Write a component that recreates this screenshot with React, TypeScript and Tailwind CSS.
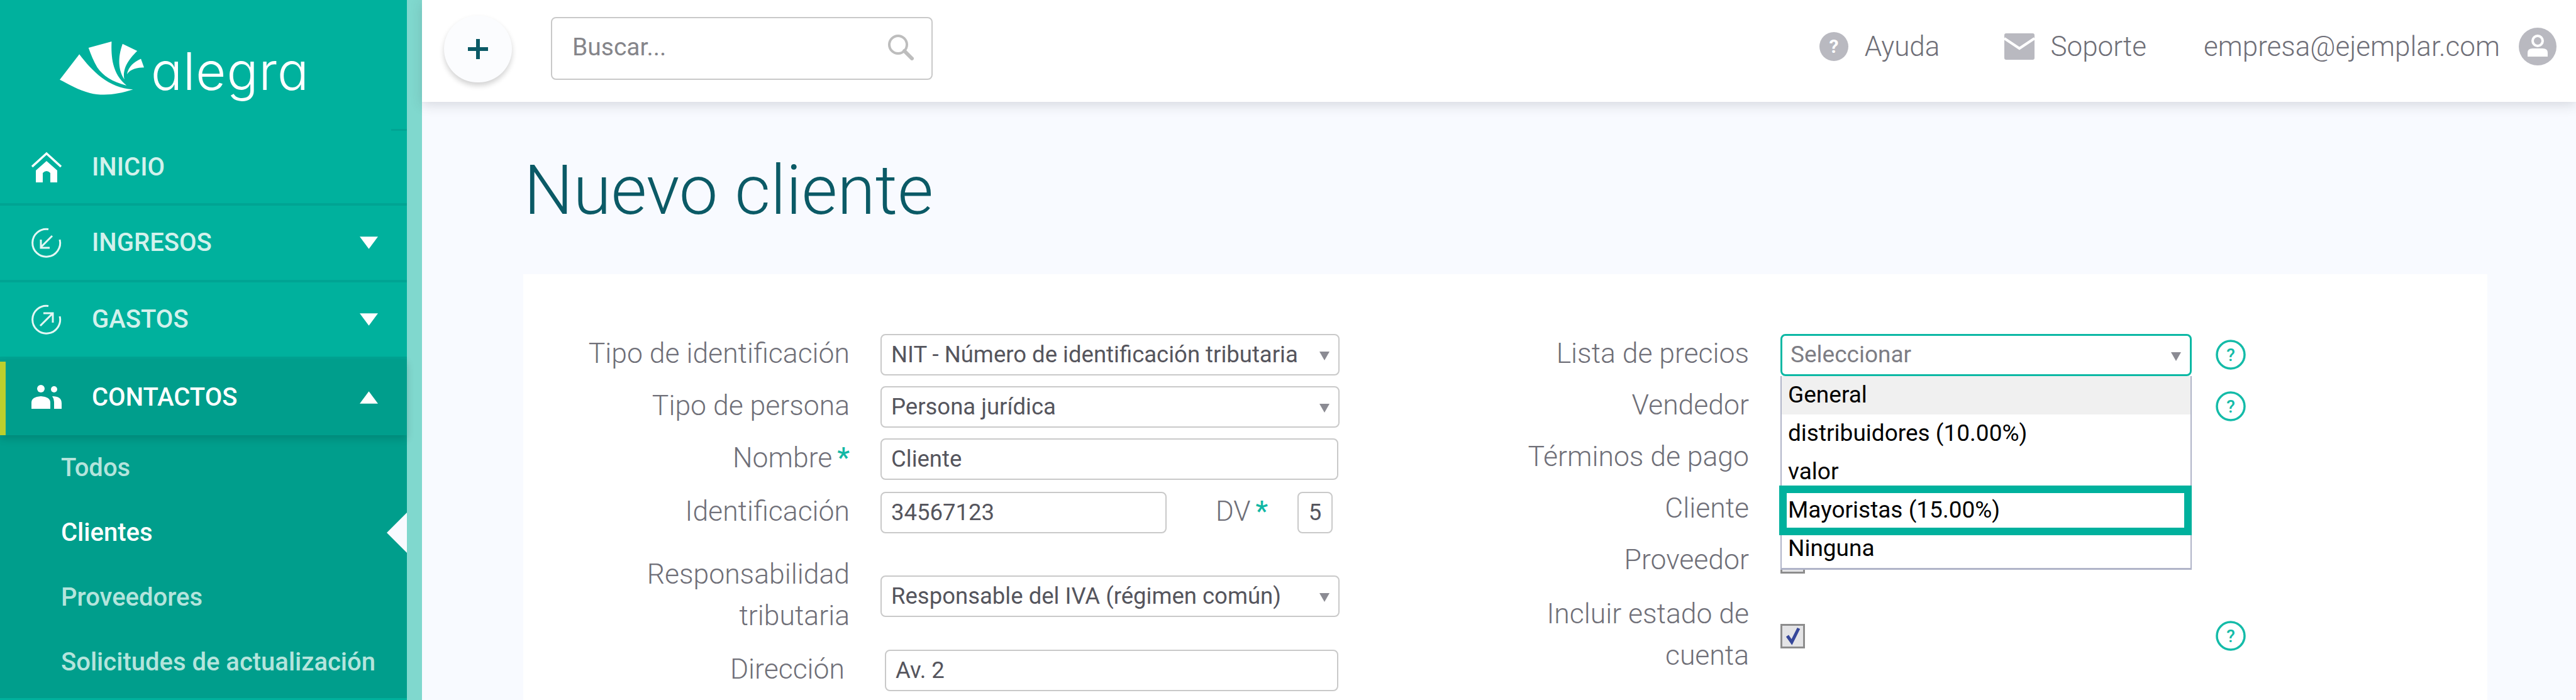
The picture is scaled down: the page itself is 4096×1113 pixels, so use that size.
import type { ReactNode } from "react";

const fieldClass =
  "flex h-[66px] items-center rounded-[8px] border-2 border-[#c9c9c9] bg-white pl-[15px] text-[36.5px] text-[#55555d]";

function Arrow({ up = false }: { up?: boolean }) {
  return (
    <svg viewBox="0 0 30 20" className="ml-auto mr-[46px] h-[20px] w-[29px] shrink-0" fill="#fff">
      <path d={up ? "M15 0 30 20H0Z" : "M0 0H30L15 20Z"} />
    </svg>
  );
}

function SelectCaret() {
  return (
    <svg viewBox="0 0 20 14" className="absolute right-[12px] top-[26px] h-[14px] w-[20px]" fill="#8b8b93">
      <path d="M2 0H18L10 14Z" />
    </svg>
  );
}

function HomeIcon() {
  return (
    <svg viewBox="0 0 50 50" className="h-[50px] w-[50px]" fill="none">
      <path d="M2 24 25 3l23 21" stroke="#fff" strokeWidth="3.5" />
      <path fillRule="evenodd" d="M25 15 42 30v19H8V30ZM19 49V34q6-6 12 0v15Z" fill="#fff" />
    </svg>
  );
}

function CircleArrow({ out = false }: { out?: boolean }) {
  return (
    <svg viewBox="0 0 50 50" className="h-[50px] w-[50px]" fill="none" stroke="#e4f7f4" strokeWidth="3">
      <path d="M28 3.5A22 22 0 1 0 46 20" />
      {out ? (
        <path d="M15 35 34 16M20 15h15v15" />
      ) : (
        <path d="M34 14 16 32M16 20v13h14" />
      )}
    </svg>
  );
}

function ContactsIcon() {
  return (
    <svg viewBox="0 0 50 40" className="h-[40px] w-[50px]" fill="#fff">
      <circle cx="16" cy="6" r="6" />
      <circle cx="37" cy="7" r="5" />
      <path d="M1 38V28q0-9 15-10 15 1 15 10v10Z" />
      <path d="M34 18q15 0 15 11v9H37V27q0-5-3-9Z" />
    </svg>
  );
}

function MenuRow({
  icon,
  label,
  arrow,
  active = false,
  bright = false,
}: {
  icon: ReactNode;
  label: string;
  arrow?: "up" | "down";
  active?: boolean;
  bright?: boolean;
}) {
  return (
    <div
      className={
        active
          ? "relative z-10 flex h-[121px] items-center bg-[#009e8c] shadow-[0_6px_12px_rgba(0,0,0,0.14)]"
          : "flex h-[122px] items-center border-b-4 border-[#00a493]"
      }
    >
      {active && <div className="absolute bottom-0 left-0 top-[4px] w-[9px] bg-[#bccf2d]" />}
      <div className="ml-[49px] flex w-[50px] justify-center">{icon}</div>
      <span
        className={
          bright
            ? "ml-[47px] text-[40px] font-medium text-white"
            : "ml-[47px] text-[40px] font-medium text-[#d3f1ec]"
        }
      >
        {label}
      </span>
      {arrow && <Arrow up={arrow === "up"} />}
    </div>
  );
}

function SubItem({ label, current = false }: { label: string; current?: boolean }) {
  return (
    <div className="relative flex h-[103px] items-center pl-[97px]">
      <span className={current ? "text-[40px] font-medium text-white" : "text-[40px] font-medium text-[#b4e4dc]"}>
        {label}
      </span>
      {current && (
        <svg viewBox="0 0 32 64" className="absolute right-0 top-[20px] h-[64px] w-[32px]" fill="#f8faff">
          <path d="M32 0 0 32l32 32Z" />
        </svg>
      )}
    </div>
  );
}

function Sidebar() {
  return (
    <aside className="flex h-full w-[647px] shrink-0 flex-col bg-[#00b19d]">
      <div className="flex h-[205px] items-start pl-[95px] pt-[66px]">
        <svg viewBox="65 108 460 342" preserveAspectRatio="none" className="h-[87px] w-[134px]" fill="#fff">
          <path d="M65 347 172 188C240 290 330 400 465 408 380 440 300 450 230 430 170 415 110 372 65 347Z" />
          <path d="M222 147 348 108C345 200 350 310 430 383 350 360 300 320 270 270 250 230 235 190 222 147Z" />
          <path d="M408 123 488 167C440 220 405 280 418 345 385 290 380 210 408 123Z" />
          <path d="M508 216 525 270C490 270 450 280 432 312 440 265 470 235 508 216Z" />
        </svg>
        <span className="ml-[11px] mt-[-3px] font-['Inter'] text-[83px] font-light leading-[100px] tracking-[1px] text-white [font-feature-settings:'cv11']">
          alegra
        </span>
      </div>
      <div className="ml-auto h-[3px] w-[25px] bg-[#00a493]" />
      <div className="flex h-[119px] items-center border-b-4 border-[#00a493]">
        <div className="ml-[49px] flex w-[50px] justify-center">
          <HomeIcon />
        </div>
        <span className="ml-[47px] text-[40px] font-medium text-[#d3f1ec]">INICIO</span>
      </div>
      <MenuRow icon={<CircleArrow />} label="INGRESOS" arrow="down" />
      <MenuRow icon={<CircleArrow out />} label="GASTOS" arrow="down" />
      <MenuRow icon={<ContactsIcon />} label="CONTACTOS" arrow="up" active bright />
      <div className="flex flex-1 flex-col border-b-[3px] border-[#00b19d] bg-[#009e8c]">
        <SubItem label="Todos" />
        <SubItem label="Clientes" current />
        <SubItem label="Proveedores" />
        <SubItem label="Solicitudes de actualización" />
      </div>
    </aside>
  );
}

function Topbar() {
  return (
    <header className="relative z-10 flex h-[162px] shrink-0 items-center bg-white shadow-[0_5px_18px_rgba(60,65,80,0.18)]">
      <div className="mb-[6px] ml-[35px] flex h-[106px] w-[108px] items-center justify-center rounded-full bg-[#fbfcfe] shadow-[0_5px_8px_rgba(0,0,0,0.18)]">
        <svg viewBox="0 0 32 32" className="h-[32px] w-[32px]" fill="#0b5a66">
          <path d="M13 0h6v13h13v6H19v13h-6V19H0v-6h13Z" />
        </svg>
      </div>
      <div className="mb-[8px] ml-[62px] flex h-[100px] w-[607px] items-center rounded-[8px] border-2 border-[#c9c9c9] pb-[4px] pl-[32px] pr-[28px]">
        <span className="text-[39px] text-[#85858a]">Buscar...</span>
        <svg viewBox="0 0 42 42" className="ml-auto h-[42px] w-[42px]" fill="none" stroke="#bdbdbd" strokeWidth="4">
          <circle cx="17" cy="17" r="14" />
          <path d="m27 27 12 12" strokeWidth="6" strokeLinecap="round" />
        </svg>
      </div>
      <nav className="mb-[14px] ml-auto mr-[31px] flex items-center text-[44px] font-light text-[#6f6f78]">
        <svg viewBox="0 0 46 46" className="h-[46px] w-[46px]">
          <circle cx="23" cy="23" r="23" fill="#b9b9c0" />
          <text x="23" y="33" textAnchor="middle" fontSize="30" fontWeight="700" fill="#fff" fontFamily="Roboto">
            ?
          </text>
        </svg>
        <span className="ml-[26px]">Ayuda</span>
        <svg viewBox="0 0 48 42" className="ml-[103px] h-[42px] w-[48px]">
          <path d="M3 0H45Q48 0 48 3V39Q48 42 45 42H3Q0 42 0 39V3Q0 0 3 0Z" fill="#b9b9c0" />
          <path d="M0 8 24 24 48 8" fill="none" stroke="#fff" strokeWidth="4" />
        </svg>
        <span className="ml-[25px]">Soporte</span>
        <span className="ml-[91px]">empresa@ejemplar.com</span>
        <svg viewBox="0 0 60 60" className="ml-[30px] h-[60px] w-[60px]">
          <circle cx="30" cy="30" r="30" fill="#b9b9c0" />
          <circle cx="30" cy="21" r="8" fill="none" stroke="#fff" strokeWidth="4" />
          <path d="M14 46V40Q14 33 22 33H38Q46 33 46 40V46Z" fill="#fff" />
        </svg>
      </nav>
    </header>
  );
}

function Label({ children }: { children: ReactNode }) {
  return <span className="text-right text-[44.5px] font-light leading-[66px] text-[#6f6f78]">{children}</span>;
}

function Star() {
  return <span className="ml-[8px] font-medium text-[#11b8a5]">*</span>;
}

function LeftRow({
  label,
  className,
  children,
}: {
  label: ReactNode;
  className: string;
  children: ReactNode;
}) {
  return (
    <div className={`flex items-center ${className}`}>
      <div className="flex w-[519px] justify-end pb-[4px]">
        <Label>{label}</Label>
      </div>
      {children}
    </div>
  );
}

function LeftColumn() {
  return (
    <div className="w-[1298px] shrink-0 pt-[93px]">
      <LeftRow label="Tipo de identificación" className="">
        <div className={`relative ml-[49px] w-[730px] ${fieldClass}`}>
          NIT - Número de identificación tributaria
          <SelectCaret />
        </div>
      </LeftRow>
      <LeftRow label="Tipo de persona" className="mt-[13px]">
        <div className={`relative ml-[49px] w-[730px] ${fieldClass}`}>
          Persona jurídica
          <SelectCaret />
        </div>
      </LeftRow>
      <LeftRow
        label={
          <>
            Nombre
            <Star />
          </>
        }
        className="mt-[13px]"
      >
        <div className={`ml-[49px] w-[728px] ${fieldClass}`}>Cliente</div>
      </LeftRow>
      <LeftRow label="Identificación" className="mt-[15px]">
        <div className={`ml-[49px] w-[455px] ${fieldClass}`}>34567123</div>
        <span className="mb-[4px] ml-[78px] w-[84px] whitespace-nowrap text-[44px] font-light text-[#6f6f78]">
          DV
          <Star />
        </span>
        <div className={`ml-[46px] w-[56px] !pl-0 justify-center ${fieldClass}`}>5</div>
      </LeftRow>
      <LeftRow
        label={
          <>
            Responsabilidad
            <br />
            tributaria
          </>
        }
        className="mt-[30px]"
      >
        <div className={`relative ml-[49px] w-[730px] ${fieldClass}`}>
          Responsable del IVA (régimen común)
          <SelectCaret />
        </div>
      </LeftRow>
      <div className="mt-[15px] flex items-center">
        <div className="flex w-[511px] justify-end pb-[4px]">
          <Label>Dirección</Label>
        </div>
        <div className={`ml-[64px] w-[721px] ${fieldClass}`}>Av. 2</div>
      </div>
    </div>
  );
}

function HelpIcon() {
  return (
    <svg viewBox="0 0 48 48" className="h-[48px] w-[48px]">
      <circle cx="24" cy="24" r="22" fill="none" stroke="#14bba8" strokeWidth="3.5" />
      <text x="24" y="34" textAnchor="middle" fontSize="28" fontWeight="500" fill="#14bba8" fontFamily="Roboto">
        ?
      </text>
    </svg>
  );
}

function RightRow({
  label,
  control,
  help = false,
  tall = false,
}: {
  label: ReactNode;
  control?: ReactNode;
  help?: boolean;
  tall?: boolean;
}) {
  return (
    <div className={tall ? "flex h-[156px] items-center" : "flex h-[82px] items-center"}>
      <div className="flex w-[651px] shrink-0 justify-end pb-[4px]">
        <Label>{label}</Label>
      </div>
      <div className="ml-[50px] w-[654px] shrink-0">{control}</div>
      {help && (
        <div className="ml-[38px]">
          <HelpIcon />
        </div>
      )}
    </div>
  );
}

const priceLists = ["General", "distribuidores (10.00%)", "valor", "Mayoristas (15.00%)", "Ninguna"];

function PriceListSelect() {
  return (
    <div className="relative z-10">
      <div className="relative flex h-[67px] items-center rounded-[8px] border-[3px] border-[#0bb8a4] bg-white pl-[13px] text-[37px] text-[#7d7d84]">
        Seleccionar
        <SelectCaret />
      </div>
      <ul className="absolute left-0 top-full w-full border-x-2 border-b-[3px] border-[#b0b4c8] bg-white text-[37px] text-black">
        {priceLists.map((name, index) => (
          <li
            key={name}
            className={
              index === 0
                ? "relative flex h-[61px] items-center bg-[#f0f0f0] pl-[10px]"
                : "relative flex h-[61px] items-center pl-[10px]"
            }
          >
            {name}
            {name.startsWith("Mayoristas") && (
              <span className="absolute -bottom-[9px] -left-[4px] -right-[2px] -top-[9px] border-[12px] border-[#00b19d]" />
            )}
          </li>
        ))}
      </ul>
    </div>
  );
}

function Checkbox({ checked = false }: { checked?: boolean }) {
  return (
    <div className="flex h-[39px] w-[39px] items-center justify-center border-[3px] border-[#8d8d8d] bg-[#e4e4e6]">
      {checked && (
        <svg viewBox="0 0 30 30" className="h-[30px] w-[30px]" fill="none" stroke="#36479a" strokeWidth="5">
          <path d="M6 15l7 10L24 3" />
        </svg>
      )}
    </div>
  );
}

function RightColumn() {
  return (
    <div className="pt-[87px]">
      <RightRow label="Lista de precios" control={<PriceListSelect />} help />
      <RightRow label="Vendedor" help />
      <RightRow label="Términos de pago" />
      <RightRow label="Cliente" />
      <RightRow label="Proveedor" control={<Checkbox />} />
      <RightRow
        label={
          <>
            Incluir estado de
            <br />
            cuenta
          </>
        }
        control={<Checkbox checked />}
        help
        tall
      />
    </div>
  );
}

export default function App() {
  return (
    <div className="flex h-[1113px] w-[4096px] overflow-hidden bg-[#f8faff] font-['Roboto',sans-serif]">
      <Sidebar />
      <div className="h-full w-[24px] shrink-0 bg-[#80d8ce]" />
      <main className="flex h-full min-w-0 flex-1 flex-col">
        <Topbar />
        <div className="flex min-h-0 flex-1 flex-col pl-[161px] pr-[141px]">
          <h1 className="h-[274px] pl-[1px] pt-[76px] text-[110px] font-light leading-[130px] text-[#0b5a66]">
            Nuevo cliente
          </h1>
          <section className="flex flex-1 bg-white">
            <LeftColumn />
            <RightColumn />
          </section>
        </div>
      </main>
    </div>
  );
}
